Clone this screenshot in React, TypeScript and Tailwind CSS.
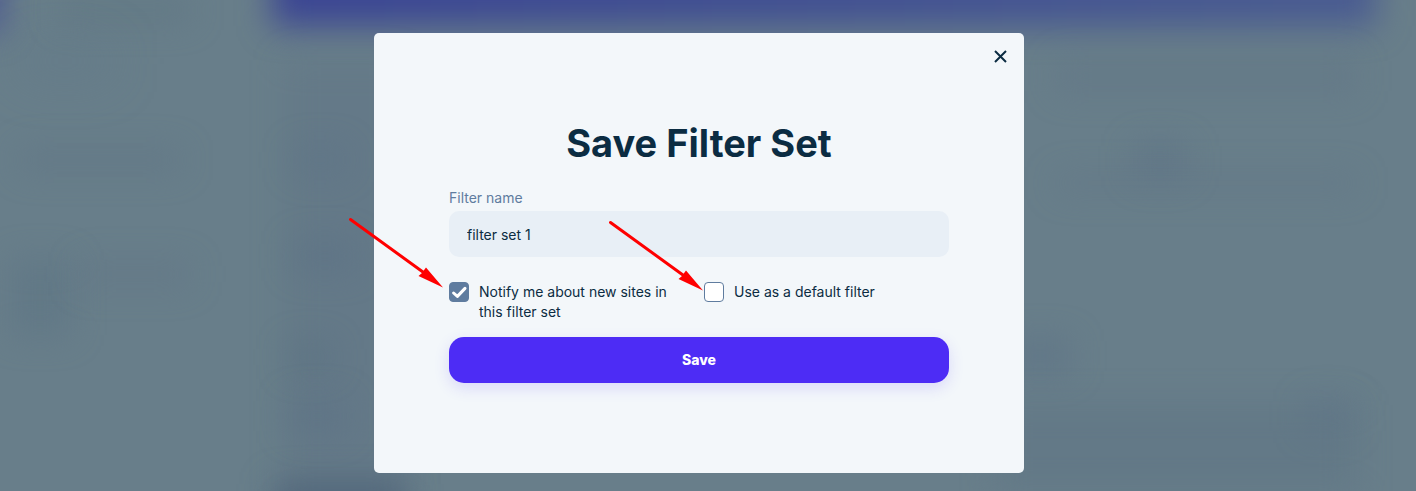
import React, { useState } from 'react';

const BACKDROP_SHAPES = [
  // top bar and the corner of the side navigation
  '-top-10 -left-10 w-[44px] h-[72px] bg-[#3d4596]/60 blur-lg',
  '-top-16 left-[272px] right-[40px] h-[90px] bg-linear-to-r from-[#3b4593] to-[#4a5c91] blur-lg',
  // sidebar text
  'top-0 left-[60px] w-[130px] h-5 bg-[#5e7480]/60 blur-lg',
  'top-[45px] left-5 w-[90px] h-8 bg-[#5f7788]/40 blur-xl',
  'top-[150px] left-5 w-[160px] h-5 bg-[#5e7484]/50 blur-lg',
  'top-[260px] left-[10px] w-[60px] h-[75px] bg-[#5e7484]/60 blur-lg',
  'top-[262px] left-[80px] w-[110px] h-6 bg-[#5e7484]/40 blur-lg',
  // table column behind the dialog
  'top-[60px] left-[285px] w-[120px] h-[440px] bg-[#5e7484]/40 blur-lg',
  'top-[148px] left-[295px] w-[50px] h-6 bg-[#5b7186]/50 blur-lg',
  'top-[242px] left-[295px] w-[60px] h-7 bg-[#5b7186]/60 blur-lg',
  'top-[345px] left-[290px] w-[40px] h-6 bg-[#587080]/60 blur-lg',
  'top-[400px] left-[290px] w-[55px] h-8 bg-[#5b7186]/60 blur-lg',
  '-bottom-6 left-[275px] w-[130px] h-8 bg-[#4f6479] blur-lg',
  // right-hand rows
  'top-[60px] right-[60px] w-[300px] h-8 bg-[#5e7484]/40 blur-lg',
  'top-[145px] left-[1135px] w-[50px] h-8 bg-[#5b7186]/60 blur-lg',
  'top-[175px] right-[60px] w-[300px] h-4 bg-[#5e7484]/40 blur-lg',
  'top-[340px] left-[1010px] w-[60px] h-8 bg-[#5b7186]/60 blur-lg',
  'top-[400px] right-[66px] w-[45px] h-8 bg-[#5b7186]/40 blur-lg',
  'top-[405px] right-[60px] w-[360px] h-[86px] bg-[#5e7484]/50 blur-lg',
];

const FONT = "font-['Inter',sans-serif]";

function Arrow({ className }: { className: string }) {
  return (
    <svg
      className={`absolute pointer-events-none ${className}`}
      width="96"
      height="72"
      viewBox="0 0 96 72"
      fill="none"
      aria-hidden="true"
    >
      <path d="M2.5 2.5 L77 56.5" stroke="#ff0000" strokeWidth="3" strokeLinecap="round" />
      <path d="M95 70.5 L78 50.5 L75 54.5 L74 56 L70.5 59 Z" fill="#ff0000" />
    </svg>
  );
}

type CheckFieldProps = {
  id: string;
  label: string;
  checked: boolean;
  onChange: (value: boolean) => void;
  arrow: string;
};

function CheckField({ id, label, checked, onChange, arrow }: CheckFieldProps) {
  return (
    <div className="relative flex flex-1 items-start gap-[10px]">
      <span className="relative h-5 w-5 shrink-0">
        <input
          id={id}
          type="checkbox"
          checked={checked}
          onChange={(e) => onChange(e.target.checked)}
          className="block h-5 w-5 appearance-none rounded-[4px] border border-[#5f7c9f] bg-white checked:bg-[#5f7c9f]"
        />
        {checked && (
          <svg className="absolute inset-0 pointer-events-none" width="20" height="20" viewBox="0 0 20 20" fill="none" aria-hidden="true">
            <path d="M4.6 11 L8.4 14.4 L16 6.4" stroke="white" strokeWidth="3" strokeLinecap="round" strokeLinejoin="round" />
          </svg>
        )}
      </span>
      <label htmlFor={id} className="text-[14px] leading-5 text-[#0b2c42]">{label}</label>
      <Arrow className={arrow} />
    </div>
  );
}

export default function App() {
  const [name, setName] = useState('filter set 1');
  const [notify, setNotify] = useState(true);
  const [isDefault, setIsDefault] = useState(false);

  return (
    <div className={`relative min-h-screen overflow-hidden bg-[#687e8a] pt-[33px] pr-[18px] pb-[18px] ${FONT}`}>
      <div className="absolute inset-0" aria-hidden="true">
        {BACKDROP_SHAPES.map((shape) => (
          <div key={shape} className={`absolute ${shape}`} />
        ))}
      </div>

      <div role="dialog" aria-labelledby="dialog-title" className="relative mx-auto max-w-[650px] rounded-[5px] bg-[#f3f7fa] px-[75px] pt-[85px] pb-[90px]">
        <button type="button" aria-label="Close" className="absolute top-4 right-4 p-px">
          <svg className="block" width="13" height="13" viewBox="0 0 13 13" fill="none" aria-hidden="true">
            <path d="M1 1 L12 12 M12 1 L1 12" stroke="#0b2c42" strokeWidth="2" />
          </svg>
        </button>

        <h1 id="dialog-title" className="text-center text-[38px] leading-[50px] font-bold text-[#0b2c42]">
          Save Filter Set
        </h1>

        <form onSubmit={(e) => e.preventDefault()}>
          <label htmlFor="filter-name" className="mt-5 block text-[14px] leading-5 text-[#5f7c9f]">
            Filter name
          </label>
          <input
            id="filter-name"
            type="text"
            value={name}
            onChange={(e) => setName(e.target.value)}
            className="mt-[3px] block h-[46px] w-full rounded-[10px] bg-[#e8eff6] px-[18px] text-[14px] text-[#0b2c42] outline-none"
          />

          <div className="mt-[25px] flex gap-[10px]">
            <CheckField
              id="notify"
              label="Notify me about new sites in this filter set"
              checked={notify}
              onChange={setNotify}
              arrow="-left-[101px] -top-[65px]"
            />
            <CheckField
              id="default-filter"
              label="Use as a default filter"
              checked={isDefault}
              onChange={setIsDefault}
              arrow="-left-[96px] -top-[62px]"
            />
          </div>

          <button
            type="submit"
            className="mt-[15px] block h-[46px] w-full rounded-[15px] bg-[#4d2cf5] text-[14px] leading-5 font-extrabold text-white shadow-[0_5px_15px_rgba(77,44,245,0.15)]"
          >
            Save
          </button>
        </form>
      </div>
    </div>
  );
}
